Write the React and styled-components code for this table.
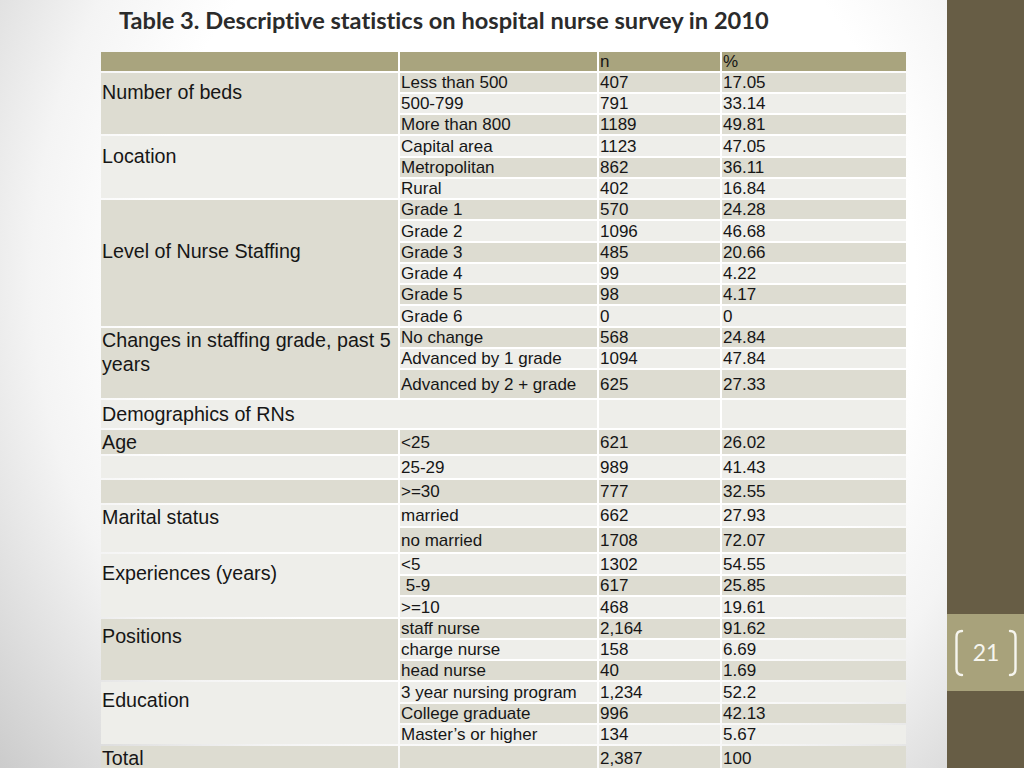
import React from 'react';
import styled, { createGlobalStyle } from 'styled-components';

const GlobalStyle = createGlobalStyle`
  html, body {
    margin: 0;
    padding: 0;
    width: 1024px;
    height: 768px;
    overflow: hidden;
  }
  body {
    font-family: "Liberation Sans", Arial, sans-serif;
    color: #161616;
  }
`;

const HEADER_H = 19;

// label, n, %  -- plus the row height in px
const rows = [
  ['Less than 500', '407', '17.05', 19],
  ['500-799', '791', '33.14', 19],
  ['More than 800', '1189', '49.81', 19],
  ['Capital area', '1123', '47.05', 20],
  ['Metropolitan', '862', '36.11', 19],
  ['Rural', '402', '16.84', 19],
  ['Grade 1', '570', '24.28', 19],
  ['Grade 2', '1096', '46.68', 20],
  ['Grade 3', '485', '20.66', 19],
  ['Grade 4', '99', '4.22', 19],
  ['Grade 5', '98', '4.17', 19],
  ['Grade 6', '0', '0', 20],
  ['No change', '568', '24.84', 19],
  ['Advanced by 1 grade', '1094', '47.84', 19],
  ['Advanced by 2 + grade', '625', '27.33', 28],
  [null, '', '', 28],
  ['<25', '621', '26.02', 24],
  ['25-29', '989', '41.43', 22],
  ['>=30', '777', '32.55', 23],
  ['married', '662', '27.93', 21],
  ['no married', '1708', '72.07', 24],
  ['<5', '1302', '54.55', 20],
  [' 5-9', '617', '25.85', 19],
  ['>=10', '468', '19.61', 20],
  ['staff nurse', '2,164', '91.62', 19],
  ['charge nurse', '158', '6.69', 19],
  ['head nurse', '40', '1.69', 19],
  ['3 year nursing program', '1,234', '52.2', 20],
  ['College graduate', '996', '42.13', 19],
  ['Master\u2019s or higher', '134', '5.67', 19],
  ['', '2,387', '100', 24],
];

// first-column groups: start row (0-based data index), span, tone, top padding
const groups = [
  { label: 'Number of beds', start: 0, span: 3, tone: 'dark', pad: 7 },
  { label: 'Location', start: 3, span: 3, tone: 'light', pad: 8 },
  { label: 'Level of Nurse Staffing', start: 6, span: 6, tone: 'dark', pad: 39 },
  { label: 'Changes in staffing grade, past 5 years', start: 12, span: 3, tone: 'dark', pad: 0 },
  { label: 'Demographics of RNs', start: 15, span: 1, tone: 'light', wide: true, center: true },
  { label: 'Age', start: 16, span: 1, tone: 'dark', center: true },
  { label: '', start: 17, span: 1, tone: 'light' },
  { label: '', start: 18, span: 1, tone: 'dark' },
  { label: 'Marital status', start: 19, span: 2, tone: 'light', pad: 0 },
  { label: 'Experiences (years)', start: 21, span: 3, tone: 'light', pad: 7 },
  { label: 'Positions', start: 24, span: 3, tone: 'dark', pad: 5 },
  { label: 'Education', start: 27, span: 3, tone: 'light', pad: 6 },
  { label: 'Total', start: 30, span: 1, tone: 'dark', pad: 0 },
];

const tones = {
  head: '#a9a47e',
  dark: '#dddcd1',
  light: '#eeeeea',
};

const App = () => (
  <Page>
    <GlobalStyle />
    <Slide>
      <Title>Table 3. Descriptive statistics on hospital nurse survey in 2010</Title>
      <Table $rows={[HEADER_H, ...rows.map((r) => r[3])]}>
        <Cell $tone="head" $row={1} $col={1} />
        <Cell $tone="head" $row={1} $col={2} />
        <Cell $tone="head" $row={1} $col={3}>n</Cell>
        <Cell $tone="head" $row={1} $col={4}>%</Cell>

        {groups.map((g) => (
          <GroupCell
            key={g.start}
            $tone={g.tone}
            $row={g.start + 2}
            $span={g.span}
            $wide={g.wide}
            $center={g.center}
            $pad={g.pad || 0}>
            {g.label}
          </GroupCell>
        ))}

        {rows.map(([label, n, pct], i) => {
          const tone = i % 2 === 0 ? 'dark' : 'light';
          return (
            <React.Fragment key={i}>
              {label !== null && <Cell $tone={tone} $row={i + 2} $col={2}>{label}</Cell>}
              <Cell $tone={tone} $row={i + 2} $col={3}>{n}</Cell>
              <Cell $tone={tone} $row={i + 2} $col={4}>{pct}</Cell>
            </React.Fragment>
          );
        })}
      </Table>
    </Slide>
    <Sidebar>
      <PageBadge>
        <Bracket viewBox="0 0 10 50">
          <path d="M8 3 Q2.5 3 2.5 9 V41 Q2.5 47 8 47" />
        </Bracket>
        <PageNumber>21</PageNumber>
        <Bracket viewBox="0 0 10 50" $flip>
          <path d="M8 3 Q2.5 3 2.5 9 V41 Q2.5 47 8 47" />
        </Bracket>
      </PageBadge>
    </Sidebar>
  </Page>
);

const Page = styled.div`
  display: flex;
  width: 1024px;
  height: 768px;
`;

const Slide = styled.main`
  flex: 1;
  padding: 5px 0 0 101px;
  background: radial-gradient(ellipse 70% 95% at 56% 36%, #ffffff 58%, #f4f4f4 75%, #c4c4c4 110%);
  overflow: hidden;
`;

const Title = styled.h1`
  margin: 0 0 17px 18px;
  font-family: Lato, "Open Sans", sans-serif;
  font-weight: 700;
  font-size: 23.6px;
  line-height: 30px;
  color: #2b2b2b;
  white-space: nowrap;
  font-variant-ligatures: none;
`;

const Table = styled.div`
  display: grid;
  grid-template-columns: 297px 197px 121px 184px;
  grid-template-rows: ${({ $rows }) => $rows.map((h) => `${h}px`).join(' ')};
  gap: 2px;
  width: max-content;
`;

const Cell = styled.div`
  grid-row: ${({ $row }) => $row};
  grid-column: ${({ $col }) => $col};
  display: flex;
  align-items: center;
  padding-left: 1px;
  background: ${({ $tone }) => tones[$tone]};
  font-size: 17px;
  line-height: 19px;
  white-space: pre;
`;

const GroupCell = styled.div`
  grid-row: ${({ $row, $span }) => `${$row} / span ${$span}`};
  grid-column: ${({ $wide }) => ($wide ? '1 / span 2' : '1')};
  display: flex;
  align-items: ${({ $center }) => ($center ? 'center' : 'flex-start')};
  padding: ${({ $pad }) => $pad}px 4px 0 1px;
  background: ${({ $tone }) => tones[$tone]};
  font-size: 19.7px;
  line-height: 24px;
`;

const Sidebar = styled.aside`
  width: 77px;
  display: flex;
  flex-direction: column;
  justify-content: flex-end;
  padding-bottom: 77px;
  background: #675d45;
`;

const PageBadge = styled.div`
  height: 77px;
  display: flex;
  align-items: center;
  justify-content: space-between;
  padding: 0 6px 0 7px;
  background: #a8a27b;
`;

const Bracket = styled.svg`
  width: 10px;
  height: 50px;
  fill: none;
  stroke: #f6f5ee;
  stroke-width: 2.4;
  stroke-linecap: round;
  transform: ${({ $flip }) => ($flip ? 'scaleX(-1)' : 'none')};
`;

const PageNumber = styled.span`
  font-family: Lato, "Open Sans", sans-serif;
  font-size: 23px;
  color: #f6f5ee;
  line-height: 1;
`;

export default App;
